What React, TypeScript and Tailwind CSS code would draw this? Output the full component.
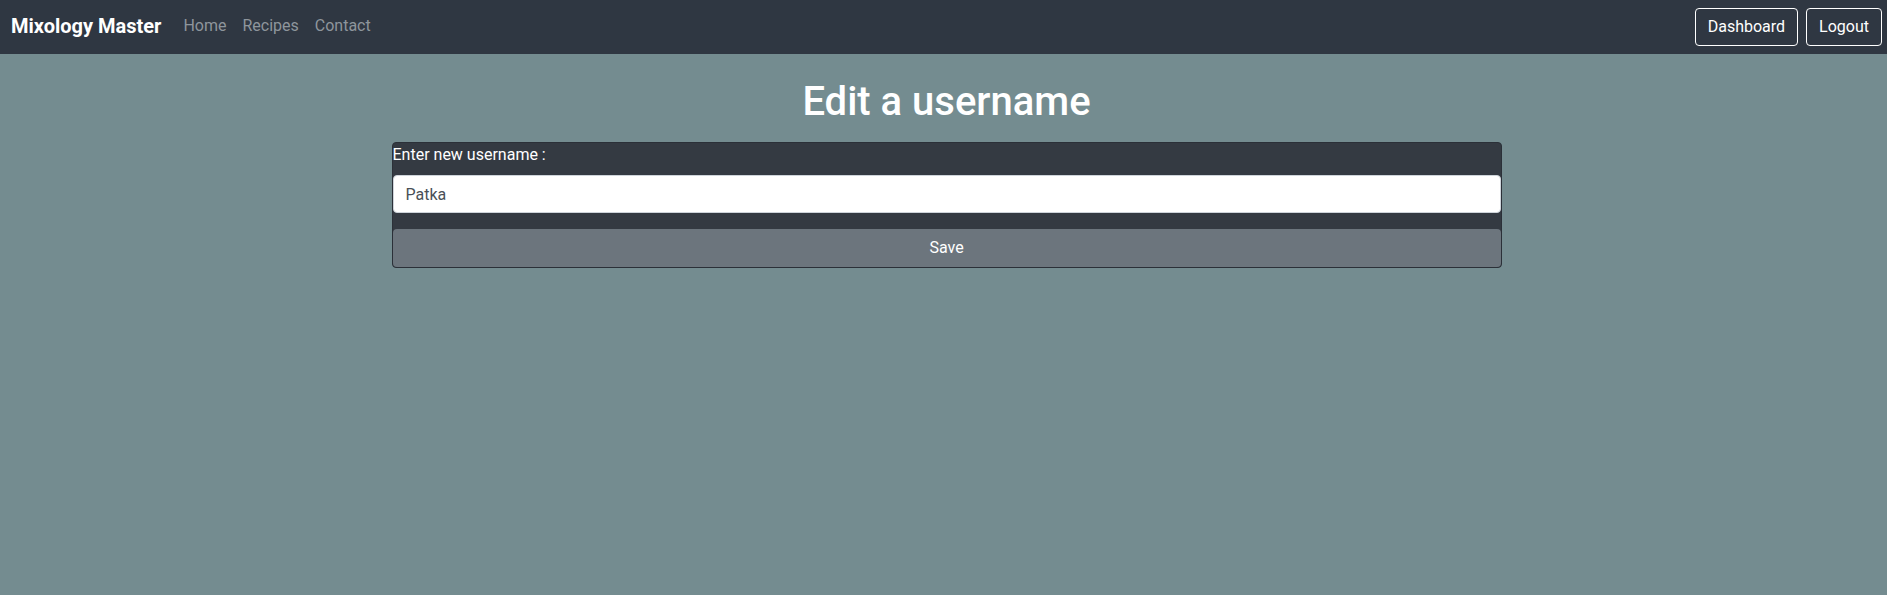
import React from "react";

export default function App() {
  return (
    <div className="min-h-[595px] w-full bg-[#748c90]" style={{ fontFamily: "Roboto, 'Liberation Sans', sans-serif" }}>
      <nav className="flex h-[54px] items-center justify-between bg-[#2f3742] pb-[2px] pl-[11px] pr-[5px]">
        <div className="flex items-center">
          <span className="text-[20px] font-bold text-white">Mixology Master</span>
          <div className="ml-[22px] flex items-center gap-[16px] text-[16px] text-[#8e959c]">
            <a>Home</a>
            <a>Recipes</a>
            <a>Contact</a>
          </div>
        </div>
        <div className="flex items-center gap-[8px] pt-[2px]">
          <button className="h-[38px] rounded-[4px] border border-white px-[12px] text-[16px] text-white">Dashboard</button>
          <button className="h-[38px] rounded-[4px] border border-white px-[12px] text-[16px] text-white">Logout</button>
        </div>
      </nav>
      <div className="flex justify-center pl-[6px]">
        <div className="w-[1110px] pt-[24px]">
          <h1 className="mb-[16px] text-center text-[40px] font-medium leading-[48px] text-white">Edit a username</h1>
          <div className="rounded-[4px] border border-[#2b3038] bg-[#343a42]">
            <label className="block text-[16px] leading-[24px] text-white">Enter new username :</label>
            <input
              className="mt-[8px] block h-[38px] w-full rounded-[4px] border border-[#ced4da] bg-white px-[12px] text-[16px] text-[#495057] outline-none"
              defaultValue="Patka"
            />
            <button className="mt-[16px] block h-[38px] w-full rounded-[4px] bg-[#6c757d] text-[16px] text-white">Save</button>
          </div>
        </div>
      </div>
    </div>
  );
}
